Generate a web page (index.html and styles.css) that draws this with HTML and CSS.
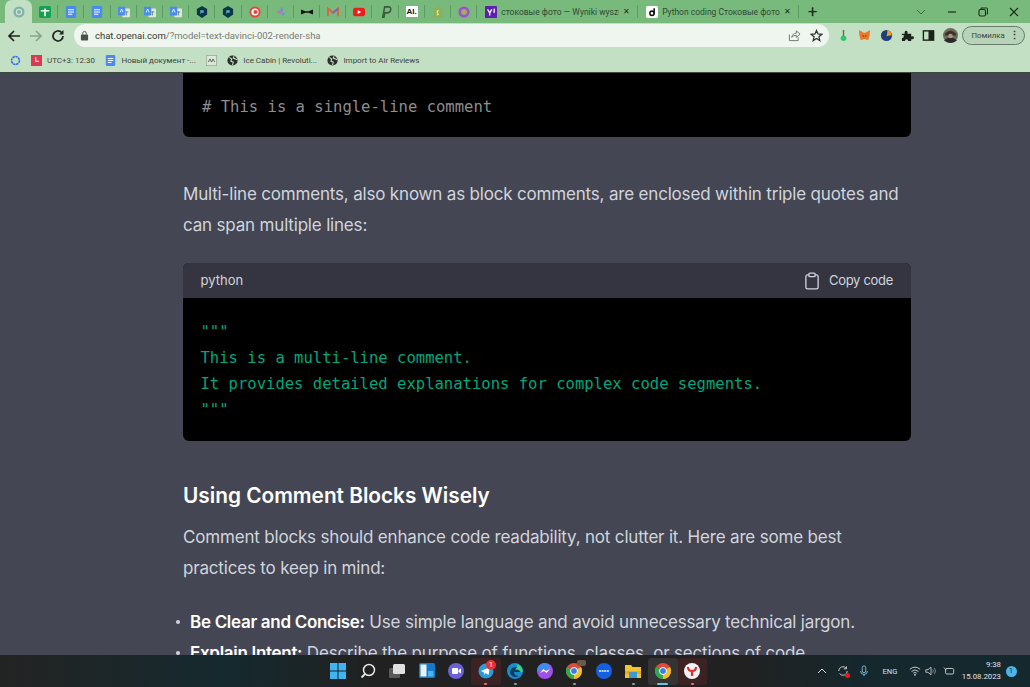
FILE: index.html
```html
<!DOCTYPE html>
<html lang="en">
<head>
<meta charset="utf-8">
<title>Python coding</title>
<link rel="stylesheet" href="styles.css">
</head>
<body>
<svg class="defs" width="0" height="0">
  <symbol id="doc" viewBox="0 0 14 14"><rect x="1" width="12" height="14" rx="1.5" fill="#4a8bf0"/><path d="M3.5 4.5h7M3.5 7h7M3.5 9.5h5" stroke="#fff" stroke-width="1.2"/></symbol>
  <symbol id="trans" viewBox="0 0 14 14"><rect x="5" y="3" width="9" height="10" rx="1" fill="#dfe7df"/><rect y="1" width="8.5" height="10" rx="1" fill="#4a8bf0"/><path d="M2.5 7.5 4.2 3.5 6 7.5" stroke="#fff" fill="none"/><path d="M8 7h4M10 6v5" stroke="#6a8a8a"/></symbol>
  <symbol id="hex" viewBox="0 0 14 14"><path d="M7 0 13 3.5V10L7 14 1 10V3.5Z" fill="#0e3446"/><path d="M5 5h4v3H6l-1 2Z" fill="#4db6c8"/></symbol>
  <symbol id="globe" viewBox="0 0 14 14"><circle cx="7" cy="7" r="6.5" fill="#2a2f2a"/><path d="M3 3 6 5 5 8 8 9 7 13M9 1.500 8 4l3 1 2 1" stroke="#c4e0c4" stroke-width="1.400" fill="none"/></symbol>
  <symbol id="chromelogo" viewBox="0 0 16 16"><circle cx="8" cy="8" r="8" fill="#e04a3a"/><path d="M8 8 1 4A8 8 0 0 0 8 16Z" fill="#2fa84f"/><path d="M8 8 8 16A8 8 0 0 0 16 8 8 8 0 0 0 15 4Z" fill="#f4c020"/><circle cx="8" cy="8" r="3.500" fill="#3a7de8" stroke="#fff"/></symbol>
</svg>
<div class="page">
  <header class="chrome">
    <div class="tabstrip">
      <div class="mini active"><svg class="ti" viewBox="0 0 14 14"><circle cx="7" cy="7" r="6.500" fill="#7fb3a6"/><circle cx="7" cy="7" r="3" fill="none" stroke="#cfe3dc" stroke-width="1.500"/></svg></div>
      <div class="mini sep"><svg class="ti" viewBox="0 0 14 14"><rect width="14" height="14" rx="2" fill="#12a150"/><path d="M2 5.500h10M7 3v9" stroke="#fff" stroke-width="1.800"/></svg></div>
      <div class="mini sep"><svg class="ti"><use href="#doc"/></svg></div>
      <div class="mini sep"><svg class="ti"><use href="#doc"/></svg></div>
      <div class="mini sep"><svg class="ti"><use href="#trans"/></svg></div>
      <div class="mini sep"><svg class="ti"><use href="#trans"/></svg></div>
      <div class="mini sep"><svg class="ti"><use href="#trans"/></svg></div>
      <div class="mini sep"><svg class="ti"><use href="#hex"/></svg></div>
      <div class="mini sep"><svg class="ti"><use href="#hex"/></svg></div>
      <div class="mini sep"><svg class="ti" viewBox="0 0 14 14"><circle cx="7" cy="7" r="6.500" fill="#e8443a"/><circle cx="7" cy="7" r="4.200" fill="#fff"/><circle cx="7.500" cy="7" r="2.400" fill="#e8443a"/></svg></div>
      <div class="mini sep"><svg class="ti" viewBox="0 0 14 14"><path d="M7 1 10 5 6 8Z" fill="#8c7ae0"/><path d="M2 7 6 5 7 10Z" fill="#d06aa8"/><path d="M8 7 12 9 8 12Z" fill="#6d8fe0"/></svg></div>
      <div class="mini sep"><svg class="ti" viewBox="0 0 14 14"><path d="M0 4 5 6H9L14 4V10L9 8H5L0 10Z" fill="#111"/></svg></div>
      <div class="mini sep"><svg class="ti" viewBox="0 0 14 14"><path d="M1 12V3L7 8 13 3V12" fill="none" stroke="#e0603f" stroke-width="2.400"/><path d="M7 8 13 3" stroke="#3f7de0" stroke-width="2"/></svg></div>
      <div class="mini sep"><svg class="ti" viewBox="0 0 14 14"><rect y="2" width="14" height="10" rx="3" fill="#ee1c1c"/><path d="M5.500 4.800v4.400L9.500 7Z" fill="#fff"/></svg></div>
      <div class="mini sep"><svg class="ti" viewBox="0 0 14 14"><path d="M3 14 5.500 1H10Q13 1 12.500 4.500T8 8H5.500L4.500 14Z" fill="none" stroke="#3c5a40" stroke-width="1.800"/></svg></div>
      <div class="mini sep"><span class="ai">AI.</span></div>
      <div class="mini sep"><svg class="ti" viewBox="0 0 14 14"><path d="M3 3 10 1 12 13 2 13Z" fill="#8fb04a"/><path d="M8 5.500Q5.500 5 6 7T7.500 9.500 5.500 10.500" stroke="#fff" fill="none"/></svg></div>
      <div class="mini sep"><svg class="ti" viewBox="0 0 14 14"><circle cx="7" cy="7" r="5" fill="none" stroke="#a050c8" stroke-width="3"/><circle cx="7" cy="7" r="2" fill="#e8903a"/></svg></div>
      <div class="tab sep">
        <svg class="ti" viewBox="0 0 14 14"><rect width="14" height="14" rx="1" fill="#5f1fb0"/><path d="M3 4 5.500 8v3M8 4 5.500 8M11 3l-.5 5" stroke="#fff" stroke-width="1.500" fill="none"/></svg>
        <span class="tabtext">стоковые фото — Wyniki wyszu</span><span class="x">✕</span>
      </div>
      <div class="tab sep">
        <svg class="ti" viewBox="0 0 14 14"><rect width="14" height="14" rx="2" fill="#fff"/><circle cx="7" cy="8.500" r="2.500" fill="none" stroke="#111" stroke-width="1.800"/><path d="M9.500 2.500V9" stroke="#111" stroke-width="1.800"/></svg>
        <span class="tabtext">Python coding Стоковые фото, и</span><span class="x">✕</span>
      </div>
      <div class="plus">+</div>
      <div class="winctl">
        <svg class="wi" viewBox="0 0 12 12"><path d="M2 4 6 8 10 4" fill="none" stroke="#3d6a40"/></svg>
        <svg class="wi" viewBox="0 0 12 12"><path d="M2 6H10" stroke="#1c2a1c" stroke-width="1.200"/></svg>
        <svg class="wi" viewBox="0 0 12 12"><rect x="2" y="3.500" width="6.500" height="6.500" rx="1.500" fill="none" stroke="#1c2a1c" stroke-width="1.100"/><path d="M4 3V2H9.500Q10.500 2 10.500 3V8H9.500" fill="none" stroke="#1c2a1c"/></svg>
        <svg class="wi" viewBox="0 0 12 12"><path d="M2 2 10 10M10 2 2 10" stroke="#1c2a1c" stroke-width="1.200"/></svg>
      </div>
    </div>
    <div class="toolbar">
      <svg class="nav" viewBox="0 0 14 14"><path d="M13 7H2M7 2 2 7 7 12" fill="none" stroke="#222" stroke-width="1.700"/></svg>
      <svg class="nav" viewBox="0 0 14 14"><path d="M1 7H12M7 2 12 7 7 12" fill="none" stroke="#8aa08a" stroke-width="1.700"/></svg>
      <svg class="nav" viewBox="0 0 14 14"><path d="M12 7A5 5 0 1 1 10.500 3.400" fill="none" stroke="#222" stroke-width="1.700"/><path d="M12.500 1V5.500H8Z" fill="#222"/></svg>
      <div class="omnibox">
        <svg class="lock" viewBox="0 0 10 12"><rect x="1" y="5" width="8" height="6.500" rx="1" fill="#4a4f4a"/><path d="M3 5V3.500A2 2 0 0 1 7 3.500V5" fill="none" stroke="#4a4f4a"/></svg>
        <span class="url"><b>chat.openai.com</b>/?model=text-davinci-002-render-sha</span>
        <svg class="omi" viewBox="0 0 14 14"><path d="M1.500 6V12.500H11V9M4 9Q5 4.500 9 4.500V2L13 5.500 9 9V6.800Q6 6.500 4 9Z" fill="none" stroke="#6a716a"/></svg>
        <svg class="omi" viewBox="0 0 14 14"><path d="M7 1.500 8.600 5.300 12.800 5.700 9.600 8.400 10.600 12.500 7 10.300 3.400 12.500 4.400 8.400 1.200 5.700 5.400 5.300Z" fill="none" stroke="#2c322c" stroke-width="1.300"/></svg>
      </div>
      <div class="exts">
        <svg class="ext" viewBox="0 0 14 14"><path d="M7 1V8" stroke="#5a6a5a" stroke-width="1.500"/><circle cx="7" cy="10" r="3" fill="#2fc46a"/></svg>
        <svg class="ext" viewBox="0 0 14 14"><path d="M1 1 6 4H8L13 1 12.500 7 11 12 8 11H6L3 12 1.500 7Z" fill="#e8782a"/><path d="M5 7 6.500 8M9 7 7.500 8" stroke="#3a2a1a"/></svg>
        <svg class="ext" viewBox="0 0 14 14"><circle cx="7" cy="7" r="6" fill="#1d3f7a"/><path d="M8 1.200A6 6 0 0 1 12.500 7 8 8 0 0 0 7 8Q8 5 8 1.200Z" fill="#f0a020"/></svg>
        <svg class="ext" viewBox="0 0 14 14"><path d="M1 5H4Q3.500 2 5.500 2T7 5H11V8Q14 7.500 14 9.500T11 11V13H7.500Q8 11 6 11T4.500 13H1V9.500Q3 10 3 7.500T1 7Z" fill="#1c221c"/></svg>
        <svg class="ext" viewBox="0 0 14 14"><rect x="1.500" y="2" width="11" height="10" fill="none" stroke="#1c221c" stroke-width="1.500"/><rect x="7" y="2" width="5.500" height="10" fill="#1c221c"/></svg>
        <svg class="avatar" viewBox="0 0 16 16"><circle cx="8" cy="8" r="8" fill="#6d6a60"/><path d="M2 6Q8 0 14 6V8H2Z" fill="#3a3228"/><path d="M1 13Q8 7 15 13 12 16 8 16T1 13Z" fill="#2a2a2a"/><circle cx="8" cy="8.500" r="2.500" fill="#b09580"/></svg>
        <div class="pill"><span>Помилка</span><span class="dots">⋮</span></div>
      </div>
    </div>
    <div class="bookmarks">
      <svg class="bm" viewBox="0 0 14 14"><circle cx="7" cy="7" r="5" fill="none" stroke="#2a6de8" stroke-width="2" stroke-dasharray="3 .8"/></svg>
      <span class="bmitem"><svg class="bm" viewBox="0 0 14 14"><rect width="14" height="14" fill="#d93a50"/><path d="M6 3V8H10" fill="none" stroke="#fff" stroke-width="1.300"/></svg>UTC+3: 12:30</span>
      <span class="bmitem"><svg class="bm"><use href="#doc"/></svg>Новый документ -...</span>
      <span class="bmitem"><svg class="bm" viewBox="0 0 14 14"><rect x=".5" y=".5" width="13" height="13" fill="#dbe8d8" stroke="#9aa89a"/><path d="M3 9 5 5 7 9 9 5 11 9" fill="none" stroke="#444"/></svg></span>
      <span class="bmitem"><svg class="bm"><use href="#globe"/></svg>Ice Cabin | Revoluti...</span>
      <span class="bmitem"><svg class="bm"><use href="#globe"/></svg>Import to Air Reviews</span>
    </div>
  </header>

  <main class="main">
    <article class="article">
      <div class="code clipped">
        <pre class="source comment"># This is a single-line comment</pre>
      </div>
      <p class="para first">Multi-line comments, also known as block comments, are enclosed within triple quotes and can span multiple lines:</p>
      <div class="code">
        <div class="codehead">
          <span>python</span>
          <span class="copy"><svg class="clip" viewBox="0 0 16 20"><rect x="1" y="3" width="14" height="16" rx="2" fill="none" stroke="#d1d5db" stroke-width="1.500"/><rect x="4.500" y="1" width="7" height="4" rx="1" fill="#343541" stroke="#d1d5db" stroke-width="1.500"/></svg>Copy code</span>
        </div>
        <pre class="source green">"""
This is a multi-line comment.
It provides detailed explanations for complex code segments.
"""</pre>
      </div>
      <h3 class="heading">Using Comment Blocks Wisely</h3>
      <p class="para">Comment blocks should enhance code readability, not clutter it. Here are some best practices to keep in mind:</p>
      <ul class="list">
        <li><strong>Be Clear and Concise:</strong> Use simple language and avoid unnecessary technical jargon.</li>
        <li><strong>Explain Intent:</strong> Describe the purpose of functions, classes, or sections of code.</li>
      </ul>
    </article>
  </main>

  <footer class="taskbar">
    <div class="apps">
      <span class="app"><svg class="tbi" viewBox="0 0 16 16"><path d="M0 0H7.500V7.500H0ZM8.500 0H16V7.500H8.500ZM0 8.500H7.500V16H0ZM8.500 8.500H16V16H8.500Z" fill="#3fb4f0"/></svg></span>
      <span class="app"><svg class="tbi" viewBox="0 0 16 16"><circle cx="9" cy="7" r="5.500" fill="none" stroke="#e8e8e8" stroke-width="1.500"/><path d="M5 11 1.500 14.500" stroke="#e8e8e8" stroke-width="1.800"/></svg></span>
      <span class="app"><svg class="tbi" viewBox="0 0 16 16"><rect y="5" width="11" height="10" rx="1.500" fill="#5a5a5a"/><rect x="4" y="1" width="12" height="10" rx="1.500" fill="#e0e0e0"/></svg></span>
      <span class="app"><svg class="tbi" viewBox="0 0 16 16"><rect width="16" height="15" rx="1.500" fill="#1479c8"/><rect x="1.500" y="1.500" width="6" height="12" fill="#e8f4fc"/><rect x="9" y="8" width="5.500" height="5.500" fill="#4ab4f0"/></svg></span>
      <span class="app"><svg class="tbi" viewBox="0 0 16 16"><circle cx="8" cy="8" r="8" fill="#6a60d8"/><rect x="4" y="5" width="6" height="6" rx="1" fill="#fff"/><path d="M10.500 7 13 5.500V10.500L10.500 9Z" fill="#fff"/></svg></span>
      <span class="app hl-red"><svg class="tbi" viewBox="0 0 16 16"><circle cx="8" cy="8" r="7.500" fill="#2d9bd8"/><path d="M3 8 12 4 10.500 12 7.500 10 6.500 12 6 9.500Z" fill="#fff"/></svg><span class="badge">1</span><i class="dot red"></i></span>
      <span class="app"><svg class="tbi" viewBox="0 0 16 16"><circle cx="8" cy="8" r="8" fill="#1a8ad0"/><path d="M3 10Q3 4 9 4T14 9H7Q7 13 12 13 6 16 3 10Z" fill="#0c3d5e"/><path d="M8 6.500Q12 6 14 9.500L15.800 8.500Q15 2 9 1Q12 3 8 6.500Z" fill="#3fd27a"/></svg><i class="dot"></i></span>
      <span class="app"><svg class="tbi" viewBox="0 0 16 16"><circle cx="8" cy="8" r="8" fill="#a050e8"/><path d="M0 8A8 8 0 0 1 8 0Q14 2 13 6Z" fill="#3f8cf0"/><path d="M3 10 6.500 6 9 8 13 6 9.500 10 7 8Z" fill="#fff"/></svg></span>
      <span class="app"><svg class="tbi"><use href="#chromelogo"/></svg><span class="thumb"></span><i class="dot"></i></span>
      <span class="app"><svg class="tbi" viewBox="0 0 16 16"><circle cx="8" cy="8" r="8" fill="#1560e0"/><path d="M3 8H13" stroke="#bcd4fa" stroke-width="2" stroke-dasharray="2 .6"/></svg></span>
      <span class="app"><svg class="tbi" viewBox="0 0 16 16"><path d="M0 2H6L7.500 4H16V15H0Z" fill="#f2c230"/><rect y="8" width="16" height="3" fill="#e8a820"/><rect x="4" y="9" width="8" height="6" fill="#3a9ad8"/></svg><i class="dot"></i></span>
      <span class="app hl-grey"><svg class="tbi"><use href="#chromelogo"/></svg><i class="dash"></i></span>
      <span class="app hl-red"><svg class="tbi" viewBox="0 0 16 16"><circle cx="8" cy="8" r="8" fill="#f2f2f2"/><path d="M4 4Q4 8 8 8T12 4M8 8V13" fill="none" stroke="#e02a2a" stroke-width="2.200"/></svg><i class="dot red"></i></span>
    </div>
    <div class="tray">
      <svg class="tri" viewBox="0 0 12 12"><path d="M2 8 6 4 10 8" fill="none" stroke="#e0e0e0"/></svg>
      <span class="syncbox"><svg class="tri" viewBox="0 0 14 14"><path d="M2 7A5 5 0 0 1 11 4M12 7A5 5 0 0 1 3 10" fill="none" stroke="#e0e0e0"/><path d="M11 1.500V4.500H8" fill="none" stroke="#e0e0e0"/></svg><i class="rec"></i></span>
      <svg class="tri" viewBox="0 0 12 14"><rect x="4" y="1" width="4" height="8" rx="2" fill="none" stroke="#8cc8e8"/><path d="M2 7Q2 11 6 11T10 7M6 11V13" fill="none" stroke="#8cc8e8"/></svg>
      <span class="lang">ENG</span>
      <svg class="tri wifi" viewBox="0 0 14 12"><path d="M1 4Q7 -1 13 4M3 6.500Q7 3 11 6.500M5 8.500Q7 7 9 8.500" fill="none" stroke="#e0e0e0"/><circle cx="7" cy="10.500" r="1" fill="#e0e0e0"/></svg>
      <svg class="tri speaker" viewBox="0 0 14 12"><path d="M1 4.500H3.500L7 1.500V10.500L3.500 7.500H1Z" fill="none" stroke="#d0d0d0"/><path d="M9 4Q10.500 6 9 8M11 2.500Q13.500 6 11 9.500" fill="none" stroke="#909090"/></svg>
      <svg class="tri battery" viewBox="0 0 14 12"><rect x="3" y="3" width="9.500" height="6.500" rx="1.500" fill="none" stroke="#e0e0e0"/><path d="M1 2 4 5" stroke="#e0e0e0"/></svg>
      <span class="clock"><span>9:38</span><span>15.08.2023</span></span>
      <span class="notif">1</span>
    </div>
  </footer>
</div>
</body>
</html>
```

FILE: styles.css
```css
* { box-sizing: border-box; }
html, body { margin: 0; height: 100%; overflow: hidden; }
body { font-family: Inter, "Liberation Sans", sans-serif; background: #444654; }
.defs { position: absolute; }
.page { height: 687px; display: flex; flex-direction: column; }

/* browser chrome */
.chrome { flex: none; height: 73px; background: #c4e0c4; border-bottom: 1px solid #3c4a40; color: #333a33; font-family: Roboto, "Liberation Sans", "Noto Sans", sans-serif; }
.tabstrip { height: 23px; background: #78ba7c; display: flex; align-items: center; padding-left: 5px; }
.mini { flex: none; width: 26.2px; height: 23px; display: flex; align-items: center; justify-content: center; position: relative; }
.mini.active { width: 27px; background: #c4e0c4; border-radius: 7px 7px 0 0; }
.sep::after { content: ""; position: absolute; right: 0; top: 5px; height: 13px; width: 1px; background: #5c9a62; }
.ti { width: 12px; height: 12px; display: block; flex: none; }
.ai { background: #fff; color: #111; font: 700 8px "Liberation Sans", sans-serif; padding: 1px; }
.tab { flex: none; width: 161px; height: 23px; display: flex; align-items: center; gap: 4px; padding: 0 5px 0 8px; font-size: 8.500px; position: relative; color: #2f4a32; }
.tabtext { flex: 1; min-width: 0; overflow: hidden; white-space: nowrap; }
.x { font-size: 8px; color: #1c2a1c; margin-right: 3px; }
.plus { width: 27px; text-align: center; font-size: 17px; line-height: 23px; color: #1c2a1c; }
.winctl { margin-left: auto; display: flex; gap: 19px; padding-right: 10px; }
.wi { width: 12px; height: 12px; }

.toolbar { height: 25px; display: flex; align-items: center; padding-left: 7px; }
.nav { width: 14px; height: 14px; margin-right: 8px; flex: none; }
.omnibox { margin-left: 1px; width: 755px; height: 23px; background: #eff6ef; border-radius: 12px; display: flex; align-items: center; padding: 0 6px; }
.lock { width: 9px; height: 11px; margin-right: 6px; }
.url { flex: 1; font-size: 9.500px; color: #747c74; white-space: nowrap; }
.url b { font-weight: 400; color: #333a33; }
.omi { width: 13px; height: 13px; margin-left: 9px; }
.exts { display: flex; align-items: center; padding-left: 8px; }
.ext { width: 13px; height: 13px; margin-right: 8.300px; }
.avatar { width: 15px; height: 15px; margin-right: 4px; }
.pill { width: 63px; height: 19px; border: 1px solid #6a7a6a; border-radius: 10px; background: #b8d4b8; display: flex; align-items: center; justify-content: space-between; padding: 0 4px 0 8px; font-size: 7.800px; color: #3a443a; }
.dots { font-weight: 700; font-size: 11px; }

.bookmarks { height: 24px; display: flex; align-items: center; padding-left: 9.500px; font-size: 8px; color: #3a443a; }
.bm { width: 11px; height: 11px; flex: none; }
.bmitem { display: flex; align-items: center; gap: 5.500px; margin-left: 10px; white-space: nowrap; }

/* article */
.main { flex: 1; min-height: 0; overflow: hidden; padding-left: 183px; }
.article { width: 728px; color: #d1d5db; font-size: 17px; letter-spacing: -0.18px; line-height: 31px; }
.code { background: #000; border-radius: 6px; overflow: hidden; letter-spacing: 0; }
.code.clipped { border-radius: 0 0 6px 6px; height: 64px; }
.clipped .source { padding: 21px 19px 0; }
.codehead { height: 35px; background: #343541; display: flex; align-items: center; justify-content: space-between; padding: 0 18px 0 17.500px; font-size: 13px; line-height: 1; }
.copy { display: flex; align-items: center; gap: 10px; letter-spacing: -0.3px; }
.clip { width: 14px; height: 18px; }
.source { margin: 0; padding: 21px 17.500px 18px; font: 15.550px/26px "DejaVu Sans Mono", monospace; }
.comment { color: #8e8e8e; }
.green { color: #00a67d; }
.para { margin: 0; }
.para.first { margin: 42px 0 22px; }
.heading { margin: 39px 0 11px; color: #fff; font-size: 20.800px; line-height: 31px; font-weight: 600; letter-spacing: 0; }
.list { margin: 23px 0 0; padding: 0 0 0 7px; list-style: none; }
.list li { position: relative; }
.list li::before { content: ""; position: absolute; left: -14px; top: 13px; width: 4px; height: 4px; border-radius: 50%; background: #d1d5db; }
.list strong { color: #fff; font-weight: 600; letter-spacing: -0.3px; }

/* taskbar */
.taskbar { flex: none; height: 32px; position: relative; display: flex; align-items: center; background: linear-gradient(90deg, #232323 0, #15292e 22%, #212121 36%, #212121 72%, #14282e 85%, #14282e 100%); color: #e0e0e0; font-family: Roboto, "Liberation Sans", sans-serif; }
.apps { margin-left: 323.500px; display: flex; }
.app { width: 29.500px; height: 27px; display: flex; align-items: center; justify-content: center; position: relative; border-radius: 3px; }
.tbi { width: 16px; height: 16px; display: block; }
.hl-red { background: #3d2224; }
.hl-grey { background: #343434; }
.badge { position: absolute; left: 15px; top: 2px; width: 10px; height: 10px; border-radius: 50%; background: #ee3030; color: #fff; font-size: 7px; line-height: 10px; text-align: center; }
.thumb { position: absolute; left: 17px; top: 2px; width: 9px; height: 6px; background: #6a5a4a; border-radius: 2px; }
.dot { position: absolute; left: 13px; bottom: 0; width: 3px; height: 2px; background: #9a9a9a; border-radius: 1px; }
.dot.red { background: #f07070; }
.dash { position: absolute; left: 9px; bottom: 0; width: 11px; height: 2px; background: #60c8f0; border-radius: 1px; }
.tray { margin-left: auto; display: flex; align-items: center; padding-right: 13.500px; }
.tri { width: 12px; height: 12px; display: block; margin-right: 9px; }
.tri.wifi { margin-right: 4px; }
.tri.speaker { margin-right: 5.500px; }
.tri.battery { margin-right: 7px; }
.syncbox { position: relative; }
.rec { position: absolute; right: 8px; bottom: -1px; width: 5px; height: 5px; background: #f01414; border-radius: 50%; }
.lang { font-size: 7.500px; margin: 0 12px 0 4px; }
.clock { display: flex; flex-direction: column; align-items: flex-end; font-size: 7.800px; line-height: 12px; }
.notif { width: 11px; height: 11px; margin-left: 4.500px; border-radius: 50%; background: #4ab4f0; color: #10232a; font-size: 7px; line-height: 11px; text-align: center; }
```
